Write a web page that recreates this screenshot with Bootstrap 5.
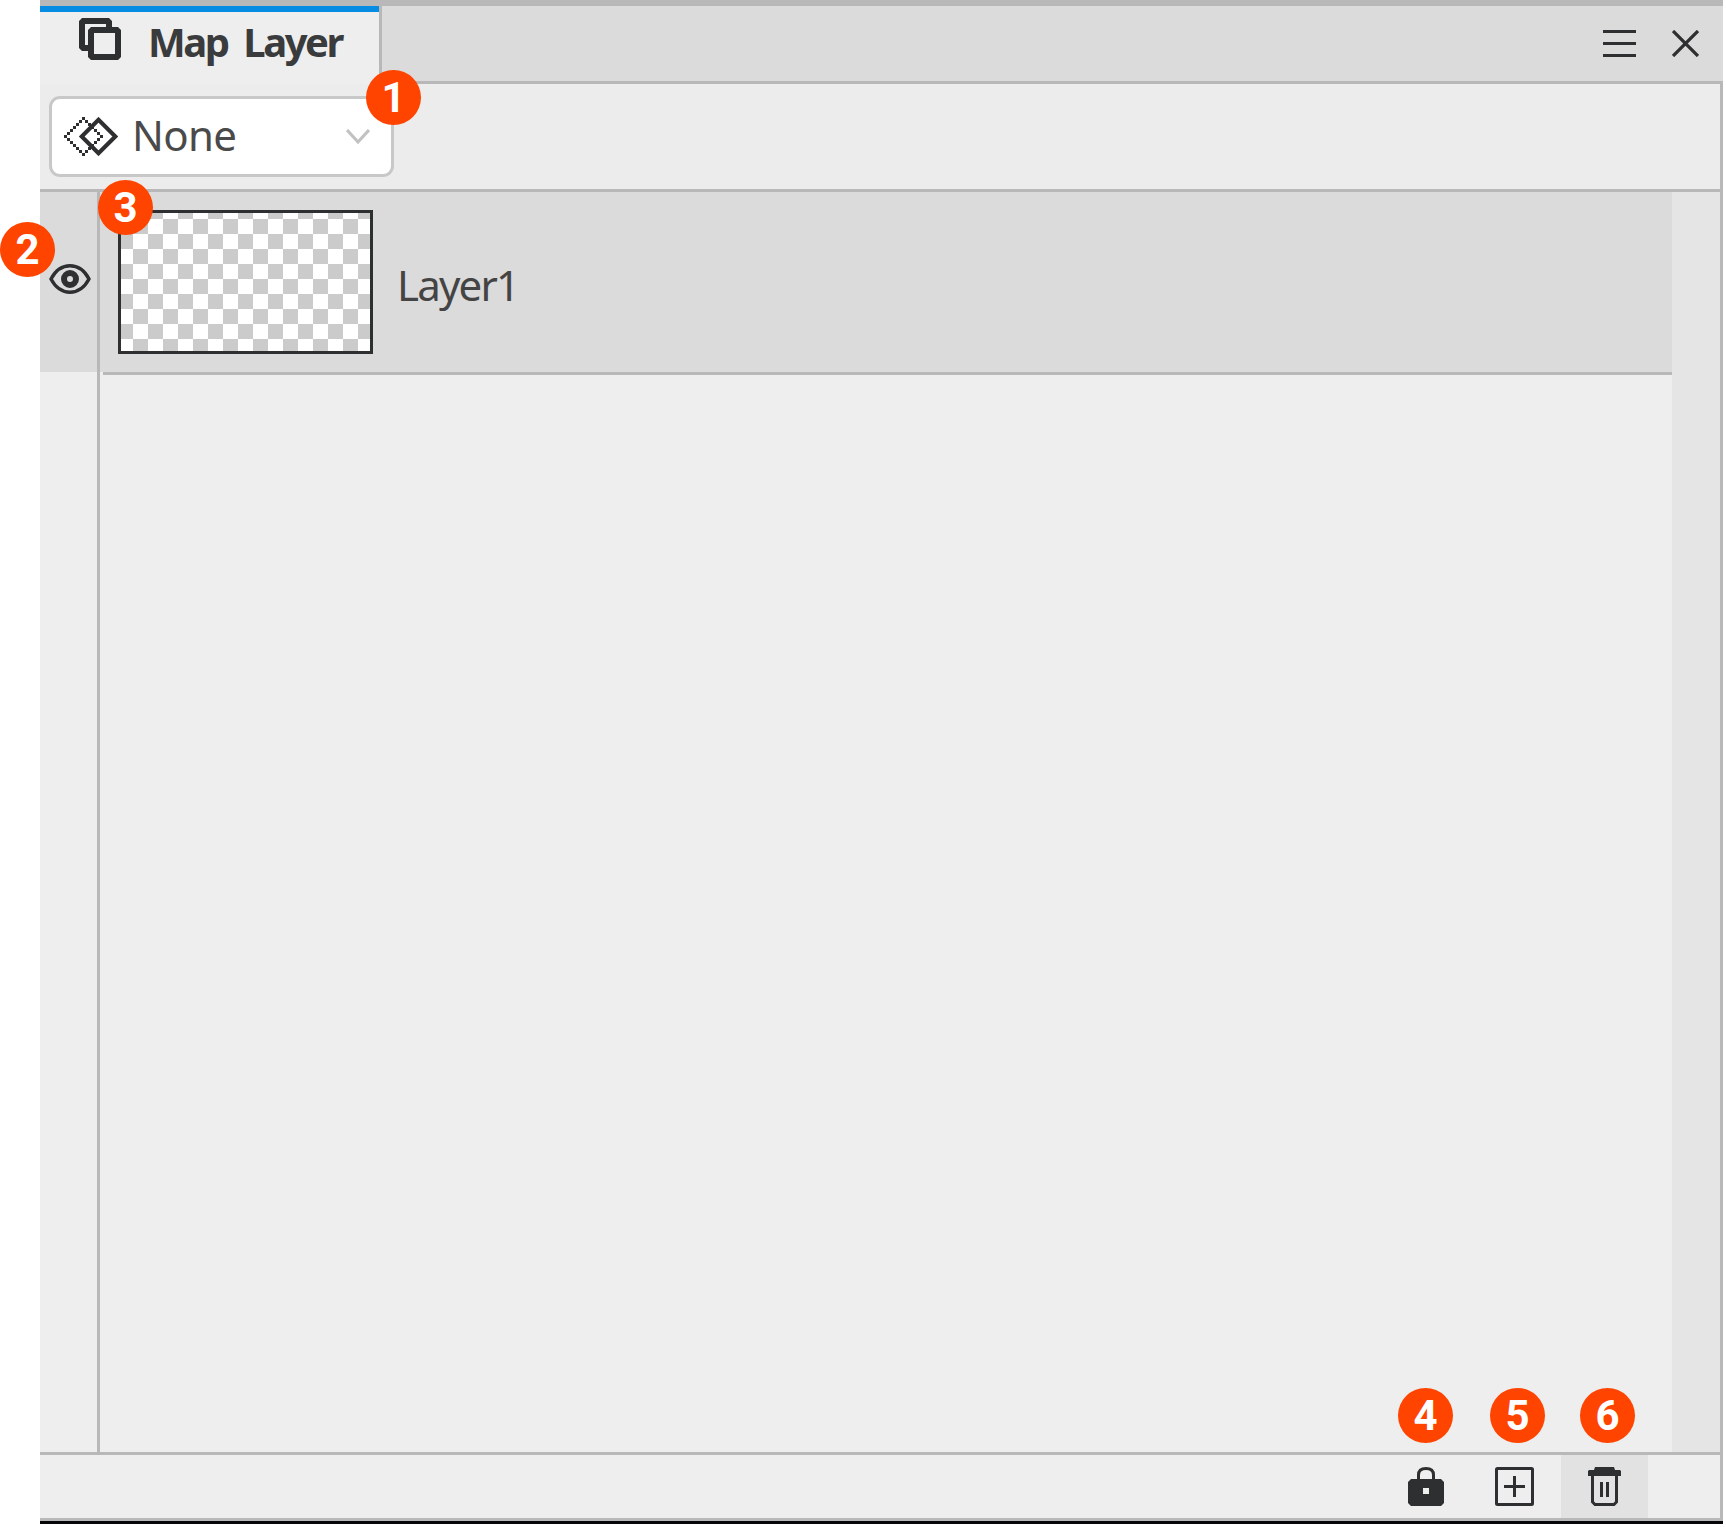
<!DOCTYPE html>
<html lang="en">
<head>
<meta charset="utf-8">
<meta name="viewport" content="width=device-width, initial-scale=1">
<title>Map Layer</title>
<link href="https://cdn.jsdelivr.net/npm/bootstrap@5.3.0/dist/css/bootstrap.min.css" rel="stylesheet">
<style>
  :root { --ink: #2e2f30; --line: #b8b8b8; --panel: #eeeeee; --sel: #dbdbdb; }
  body { background: #fff; font-family: "Noto Sans", sans-serif; font-size: 42px; line-height: 1; color: #444; }
  svg { display: block; flex: none; color: var(--ink); }
  .btn-flat { padding: 0; border: 0; border-radius: 0; line-height: 1; }
  .map-panel { width: 1683px; height: 1524px; margin-left: 40px; background: var(--panel); border-bottom: 3px solid #050607; }
  .top-edge { height: 6px; background: var(--line); }
  .tab-strip { height: 78px; background: var(--sel); }
  .tab-active { width: 342px; background: var(--panel); border-top: 6px solid #068ce2; position: relative; padding: 6px 0 0 39px; }
  .tab-active::after { content: ""; position: absolute; right: 0; top: -6px; width: 3px; height: 78px; background: var(--line); }
  .tab-title { font-weight: 700; font-size: 40px; letter-spacing: -2.5px; word-spacing: 8px; margin: 4px 0 0 27px; color: #3a3b3c; white-space: nowrap; }
  .tab-actions { border-bottom: 3px solid var(--line); padding: 24px 24px 0 0; gap: 36px; }
  .framed { border-right: 3px solid var(--line); }
  .tool-row { height: 108px; background: #ececec; border-bottom: 3px solid var(--line); padding: 12px 9px; }
  .blend-select { width: 345px; height: 81px; background: #fff; border: 3px solid #c8c8c8; border-radius: 11px; padding: 0 21px 0 12px; }
  .blend-name { margin: -3px 0 0 14px; letter-spacing: -.7px; color: #4a4a4a; }
  .vis-col { width: 60px; border-right: 3px solid var(--line); }
  .vis-cell { height: 180px; background: var(--sel); padding: 72px 0 0 9px; }
  .layer-item { height: 180px; background: var(--sel); padding-left: 18px; }
  .layer-rule { height: 3px; margin-left: 3px; background: var(--line); }
  .thumb { width: 255px; height: 144px; margin-top: 18px; border: 3px solid var(--ink);
    background: repeating-conic-gradient(#cbcbcb 0 25%, #fff 0 50%) -3px 6px / 30px 30px; }
  .layer-name { margin: 72px 0 0 24px; letter-spacing: -1.8px; }
  .scroll-track { width: 48px; background: #e5e5e5; }
  .foot-row { height: 69px; border-top: 3px solid var(--line); border-bottom: 3px solid var(--line); padding-right: 72px; }
  .foot-btn { width: 87px; height: 63px; padding-top: 12px; }
  .foot-btn.is-hot { background: #e2e2e2; }
  .foot-btn.is-lock { padding-right: 9px; }
  .foot-btn.is-add { padding-right: 6px; }
  .pin { position: absolute; width: 55px; height: 55px; border-radius: 50%; background: #ff4400; color: #fff;
    font: 700 42px/55px Roboto, sans-serif; text-align: center; }
  .pin-1 { left: 366px; top: 70px; }
  .pin-2 { left: 0; top: 222px; }
  .pin-3 { left: 98px; top: 180px; }
  .pin-4 { left: 1398px; top: 1388px; }
  .pin-5 { left: 1490px; top: 1388px; }
  .pin-6 { left: 1580px; top: 1388px; }
</style>
<script src="https://cdn.jsdelivr.net/npm/bootstrap@5.3.0/dist/js/bootstrap.bundle.min.js"></script>
</head>
<body class="position-relative overflow-hidden">
<main class="map-panel d-flex flex-column">
  <div class="top-edge"></div>
  <header class="tab-strip d-flex">
    <div class="tab-active d-flex align-items-start">
      <svg width="42" height="42" viewBox="0 0 42 42"><path d="M3 0H30L33 3V9H27V6H6V27H9V33H3L0 30V3Z" fill="currentColor"/><path fill-rule="evenodd" d="M12 9H39L42 12V39L39 42H12L9 39V12ZM15 15V36H36V15Z" fill="currentColor"/></svg>
      <div class="tab-title">Map Layer</div>
    </div>
    <div class="tab-actions d-flex flex-grow-1 justify-content-end align-items-start">
      <button class="btn btn-flat" aria-label="Menu"><svg width="33" height="27" viewBox="0 0 33 27"><path d="M0 0H33V3H0ZM0 12H33V15H0ZM0 24H33V27H0Z" fill="currentColor"/></svg></button>
      <button class="btn btn-flat" aria-label="Close"><svg width="27" height="27" viewBox="0 0 27 27"><path d="M1 1L26 26M26 1L1 26" stroke="currentColor" stroke-width="3.3"/></svg></button>
    </div>
  </header>

  <div class="tool-row framed">
    <button class="btn-flat blend-select d-flex align-items-center">
      <svg width="54" height="39" viewBox="0 0 18 13"><path shape-rendering="crispEdges" fill="currentColor" d="M6 0h1v1h-1zM5 1h1v1h-1zM7 1h1v1h-1zM4 2h1v1h-1zM8 2h1v1h-1zM3 3h1v1h-1zM9 3h1v1h-1zM2 4h1v1h-1zM10 4h1v1h-1zM1 5h1v1h-1zM11 5h1v1h-1zM0 6h1v1h-1zM12 6h1v1h-1zM1 7h1v1h-1zM11 7h1v1h-1zM2 8h1v1h-1zM10 8h1v1h-1zM3 9h1v1h-1zM9 9h1v1h-1zM4 10h1v1h-1zM8 10h1v1h-1zM5 11h1v1h-1zM7 11h1v1h-1zM6 12h1v1h-1z"/><path d="M11.500 .9L17.100 6.500L11.500 12.100L5.900 6.500Z" fill="none" stroke="currentColor" stroke-width="1.35"/></svg>
      <span class="blend-name">None</span>
      <svg class="ms-auto" width="24" height="16" viewBox="0 0 24 16"><path d="M1 1L12 13L23 1" fill="none" stroke="#c2c2c2" stroke-width="3.2"/></svg>
    </button>
  </div>

  <section class="d-flex flex-grow-1 framed">
    <div class="vis-col">
      <div class="vis-cell">
        <svg width="42" height="30" viewBox="0 0 42 30"><path d="M2 15Q9 1.8 21 1.8T40 15Q33 28.2 21 28.2T2 15Z" fill="none" stroke="currentColor" stroke-width="3.4"/><circle cx="21" cy="15" r="6" fill="none" stroke="currentColor" stroke-width="6"/></svg>
      </div>
    </div>
    <div class="flex-grow-1">
      <div class="layer-item d-flex align-items-start">
        <div class="thumb"></div>
        <div class="layer-name">Layer1</div>
      </div>
      <div class="layer-rule"></div>
    </div>
    <div class="scroll-track"></div>
  </section>

  <footer class="foot-row framed d-flex justify-content-end">
    <button class="btn btn-flat foot-btn is-lock d-flex justify-content-center align-items-start" aria-label="Lock"><svg width="36" height="39" viewBox="0 0 36 39"><path d="M10.500 13V8Q10.500 1.500 18 1.500T25.500 8V13" fill="none" stroke="currentColor" stroke-width="3"/><path fill-rule="evenodd" d="M3 12H33L36 15V36L33 39H3L0 36V15ZM15 21V27H21V21Z" fill="currentColor"/></svg></button>
    <button class="btn btn-flat foot-btn is-add d-flex justify-content-center align-items-start" aria-label="Add"><svg width="39" height="39" viewBox="0 0 39 39"><rect x="1.500" y="1.500" width="36" height="36" rx="1" fill="none" stroke="currentColor" stroke-width="3"/><path d="M9 18H18V9H21V18H30V21H21V30H18V21H9Z" fill="currentColor"/></svg></button>
    <button class="btn btn-flat foot-btn is-hot d-flex justify-content-center align-items-start" aria-label="Delete"><svg width="33" height="39" viewBox="0 0 33 39"><path d="M7 0H26L27 3H32L33 4V9H0V4L1 3H6ZM12 15H15V30H12ZM18 15H21V30H18Z" fill="currentColor"/><path d="M4.500 8V35L7 37.500H26L28.500 35V8" fill="none" stroke="currentColor" stroke-width="3"/></svg></button>
  </footer>
</main>

<span class="pin pin-1">1</span>
<span class="pin pin-2">2</span>
<span class="pin pin-3">3</span>
<span class="pin pin-4">4</span>
<span class="pin pin-5">5</span>
<span class="pin pin-6">6</span>
</body>
</html>
